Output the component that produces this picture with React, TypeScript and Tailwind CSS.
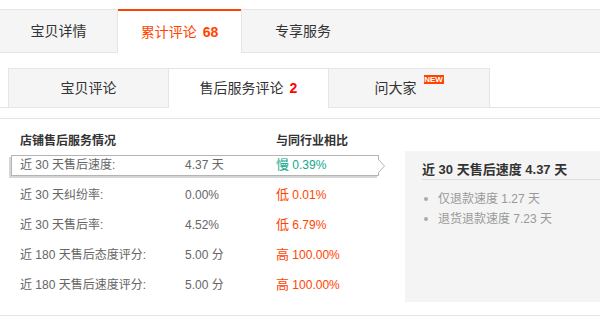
import React from 'react';

const font = { fontFamily: '"Liberation Sans", "Noto Sans CJK SC", sans-serif' };

type Row = { label: string; value: string; word: string; pct: string; tone: 'green' | 'red' };

const rows: Row[] = [
  { label: '近 30 天售后速度:', value: '4.37 天', word: '慢', pct: '0.39%', tone: 'green' },
  { label: '近 30 天纠纷率:', value: '0.00%', word: '低', pct: '0.01%', tone: 'red' },
  { label: '近 30 天售后率:', value: '4.52%', word: '低', pct: '6.79%', tone: 'red' },
  { label: '近 180 天售后态度评分:', value: '5.00 分', word: '高', pct: '100.00%', tone: 'red' },
  { label: '近 180 天售后速度评分:', value: '5.00 分', word: '高', pct: '100.00%', tone: 'red' },
];

const RowLine: React.FC<{ row: Row }> = ({ row }) => (
  <div className="flex items-center text-[12px] text-[#666]">
    <span className="w-[165px]">{row.label}</span>
    <span className="w-[91px]">{row.value}</span>
    <span className={row.tone === 'green' ? 'text-[#12a88c]' : 'text-[#ff4400]'}>
      <span className="text-[13px]">{row.word}</span> {row.pct}
    </span>
  </div>
);

const App: React.FC = () => {
  return (
    <div className="w-[600px] h-[322px] bg-white overflow-hidden" style={font}>
      {/* main tabs */}
      <div className="mt-[9px] flex h-[44px] border-y border-[#e5e5e5] bg-[#f5f5f5] text-[14px] text-[#333]">
        <div className="w-[118px] border-r border-[#e5e5e5] flex items-center justify-center">宝贝详情</div>
        <div className="w-[123px] -mt-px -mb-px h-[44px] border-t-2 border-[#ff4400] bg-white flex items-center justify-center text-[#ff4400]">
          累计评论 <b className="ml-[6px] font-bold">68</b>
        </div>
        <div className="w-[123px] border-l border-[#e5e5e5] flex items-center justify-center">专享服务</div>
      </div>

      {/* sub tabs */}
      <div className="mt-[15px] flex h-[40px] border-b border-[#e5e5e5] pl-[8px] text-[14px] text-[#333]">
        <div className="w-[161px] h-[40px] border border-[#e5e5e5] bg-[#f5f5f5] flex items-center justify-center">宝贝评论</div>
        <div className="w-[159px] h-[40px] -mb-px border-t border-[#e5e5e5] bg-white flex items-center justify-center">
          售后服务评论 <b className="ml-[6px] text-[#ff0000] font-bold">2</b>
        </div>
        <div className="w-[162px] h-[40px] border border-[#e5e5e5] bg-[#f5f5f5] flex items-center justify-center">
          <span>问大家</span>
          <span className="ml-[7px] mb-[18px] h-[9px] w-[20px] bg-[#ff4400] text-white text-[8px] leading-[9px] font-bold text-center">
            NEW
          </span>
        </div>
      </div>

      {/* content */}
      <div className="mt-[10px] border-y border-[#e5e5e5] pb-[13px] flex items-start">
        <div className="w-[405px] pl-[11px]">
          <div className="mt-[13px] h-[18px] flex items-center text-[12px] font-bold text-[#333] pl-[9px]">
            <span className="w-[256px]">店铺售后服务情况</span>
            <span>与同行业相比</span>
          </div>
          <div className="h-[30px] flex items-center">
            <div className="relative w-[368px] h-[21px] border border-[#b4b4b4] bg-white pl-[8px] flex items-center shadow-[-2px_2px_0_#d6d6d6]">
              <RowLine row={rows[0]} />
              <svg className="absolute -right-[8px] top-[3px]" width="8" height="14" viewBox="0 0 8 14">
                <path d="M0 0.5 L6.5 7 L0 13.5 Z" fill="white" />
                <path d="M0.5 0.5 L6.5 7 L0.5 13.5" fill="none" stroke="#b4b4b4" strokeWidth="1" />
              </svg>
            </div>
          </div>
          {rows.slice(1).map((r) => (
            <div key={r.label + r.pct} className="h-[30px] flex items-center pl-[9px]">
              <RowLine row={r} />
            </div>
          ))}
        </div>
        <div className="mt-[32px] w-[195px] h-[151px] bg-[#f4f4f4]">
          <div className="ml-[17px] mt-[10px] h-[19px] leading-[18px] border-b border-[#ddd] text-[13px] font-bold text-[#333]">
            近 30 天售后速度 4.37 天
          </div>
          <ul className="ml-[19px] mt-[9px] text-[12px] text-[#999]">
            <li className="h-[20px] flex items-center">
              <span className="w-[4px] h-[4px] rounded-full bg-[#aaa] mr-[10px]" />
              仅退款速度 1.27 天
            </li>
            <li className="h-[20px] flex items-center">
              <span className="w-[4px] h-[4px] rounded-full bg-[#aaa] mr-[10px]" />
              退货退款速度 7.23 天
            </li>
          </ul>
        </div>
      </div>
    </div>
  );
};

export default App;
